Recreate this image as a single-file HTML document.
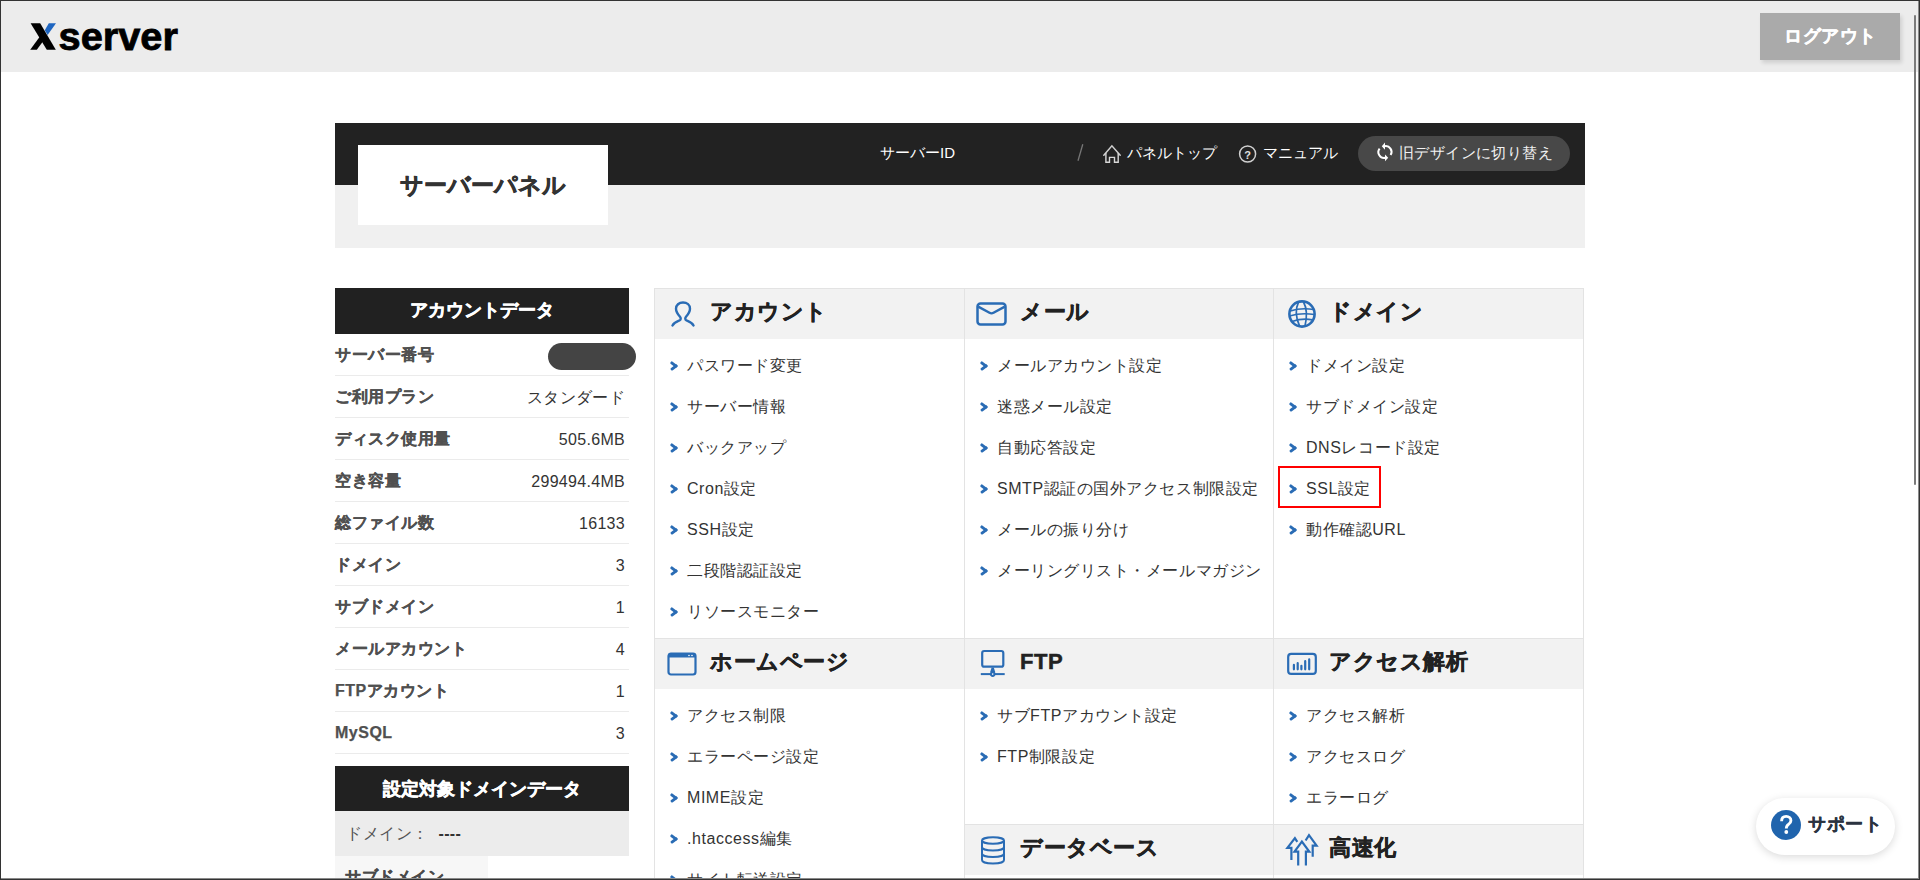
<!DOCTYPE html>
<html><head><meta charset="utf-8">
<style>
*{box-sizing:border-box;margin:0;padding:0}
html,body{width:1920px;height:880px;overflow:hidden;background:#fff}
body{font-family:"Liberation Sans",sans-serif;color:#333;position:relative}
.abs{position:absolute}
#frame{position:absolute;left:0;top:0;width:1920px;height:880px;border-top:1px solid #333;border-left:1px solid #333;border-right:1px solid #333;border-bottom:1px solid #333;box-shadow:inset -1px -1px 0 #8a8a8a;z-index:50;pointer-events:none}
#topbar{left:0;top:0;width:1920px;height:72px;background:#ececec}
#logout{left:1760px;top:13px;width:140px;height:47px;background:#aaa;color:#fff;font-weight:bold;font-size:18px;line-height:47px;text-align:center;box-shadow:2px 3px 4px rgba(0,0,0,.12);letter-spacing:0.6px;padding-left:1px;-webkit-text-stroke:0.4px #fff}
#scroll{left:1914px;top:15px;width:2px;height:470px;background:#7a7a7a;border-radius:1px}
#phead{left:335px;top:123px;width:1250px;height:62px;background:#222}
#psub{left:335px;top:185px;width:1250px;height:63px;background:#f0f0f0}
#pbox{left:358px;top:145px;width:250px;height:80px;background:#fff;font-size:23px;font-weight:bold;color:#333;text-align:center;line-height:80px;-webkit-text-stroke:0.6px #333}
.nav{color:#fff;font-size:15px;top:143px;line-height:20px;white-space:nowrap}
#pill{left:1358px;top:136px;width:212px;height:35px;border-radius:18px;background:#484848}
/* sidebar */
.shead{left:335px;width:294px;height:46px;background:#212121;color:#fff;font-weight:bold;font-size:18px;text-align:center;line-height:46px;-webkit-text-stroke:0.5px #fff}
.srow{left:335px;width:294px;height:42px;border-bottom:1px solid #ebebeb;font-size:16px;line-height:41px}
.srow b{font-size:16px;letter-spacing:0.5px;-webkit-text-stroke:0.25px #505050}
.srow b{position:absolute;left:0;top:0;color:#505050}
.srow span{position:absolute;right:4px;top:1px;color:#333;letter-spacing:0.3px}
/* grid */
.box{position:absolute;border:1px solid #e3e3e3;background:#fff}
.hd{position:absolute;height:50px;background:#f2f2f2;font-size:22px;letter-spacing:0.6px;font-weight:bold;color:#222;line-height:46px}
.hd svg{position:absolute}
.hd span{position:absolute;top:0;-webkit-text-stroke:0.5px #222}
.items{position:absolute;list-style:none}
.items li{height:41px;line-height:41px;font-size:16px;letter-spacing:0.55px;color:#333;position:relative;padding-left:32px;white-space:nowrap}
.items li:before,.items li:after{content:"";position:absolute;left:14.6px;top:18.1px;width:8px;height:2.6px;border-radius:1.3px;background:#2a6cb5;transform:rotate(37deg)}
.items li:after{top:21.3px;transform:rotate(-37deg)}
</style></head><body>
<div id="topbar" class="abs">
  <svg class="abs" style="left:28px;top:20px" width="156" height="34" viewBox="0 0 156 34"><polygon points="2.6,3.2 12.2,3.2 27.8,29.8 18.8,29.8" fill="#000"/><polygon points="2.2,29.8 8.8,29.8 16,20 13,15" fill="#000"/><polygon points="20.8,3.2 28,3.2 19.6,15 16.8,10.2" fill="#1f66c1"/><text x="30.5" y="30" font-family="Liberation Sans" font-weight="bold" font-size="39" fill="#000" stroke="#000" stroke-width="0.8" textLength="119.5" lengthAdjust="spacingAndGlyphs">server</text></svg>
</div>
<div id="logout" class="abs">ログアウト</div>
<div id="scroll" class="abs"></div>

<div id="phead" class="abs"></div>
<div id="psub" class="abs"></div>
<div id="pbox" class="abs">サーバーパネル</div>
<div class="abs nav" style="left:880px">サーバーID</div>
<svg class="abs" style="left:1076px;top:143px" width="8" height="19" viewBox="0 0 8 19"><line x1="6.8" y1="1.2" x2="2" y2="17.8" stroke="#777" stroke-width="1.3"/></svg>
<svg class="abs" style="left:1100px;top:142px" width="24" height="24" viewBox="0 0 24 24"><path d="M3.8 13.2 L11.9 3.8 L20.2 13.2" fill="none" stroke="#d0d0d0" stroke-width="1.5" stroke-linecap="round"/><path d="M5.9 11 V20.2 H9.5 V15.4 H14.5 V20.2 H18.2 V11" fill="none" stroke="#d8d8d8" stroke-width="1.4"/></svg>
<div class="abs nav" style="left:1127px">パネルトップ</div>
<svg class="abs" style="left:1236px;top:142px" width="24" height="24" viewBox="0 0 24 24"><circle cx="11.6" cy="12" r="8" fill="none" stroke="#d0d0d0" stroke-width="1.5"/><text x="11.6" y="17.2" font-size="11" font-weight="bold" text-anchor="middle" fill="#e0e0e0" font-family="Liberation Sans">?</text></svg>
<div class="abs nav" style="left:1263px">マニュアル</div>
<div id="pill" class="abs"></div>
<svg class="abs" style="left:1374px;top:140px" width="24" height="24" viewBox="0 0 24 24"><path d="M10.5 6.2 A5.8 5.8 0 0 1 16.6 15 M5.6 8.6 A5.8 5.8 0 0 0 11.5 17.8" fill="none" stroke="#fff" stroke-width="2"/><polygon points="7.8,6.2 11,2.6 11,9.8" fill="#fff"/><polygon points="14.2,17.8 11,14.4 11,21.2" fill="#fff"/></svg>
<div class="abs nav" style="left:1399px;letter-spacing:0.4px;color:#f2f2f2">旧デザインに切り替え</div>

<!-- sidebar -->
<div class="abs shead" style="top:288px;line-height:45px">アカウントデータ</div>
<div class="abs srow" style="top:334px"><b>サーバー番号</b></div>
<div class="abs" style="left:548px;top:343px;width:88px;height:27px;border-radius:14px;background:#444"></div>
<div class="abs srow" style="top:376px"><b>ご利用プラン</b><span>スタンダード</span></div>
<div class="abs srow" style="top:418px"><b>ディスク使用量</b><span>505.6MB</span></div>
<div class="abs srow" style="top:460px"><b>空き容量</b><span>299494.4MB</span></div>
<div class="abs srow" style="top:502px"><b>総ファイル数</b><span>16133</span></div>
<div class="abs srow" style="top:544px"><b>ドメイン</b><span>3</span></div>
<div class="abs srow" style="top:586px"><b>サブドメイン</b><span>1</span></div>
<div class="abs srow" style="top:628px"><b>メールアカウント</b><span>4</span></div>
<div class="abs srow" style="top:670px"><b>FTPアカウント</b><span>1</span></div>
<div class="abs srow" style="top:712px"><b>MySQL</b><span>3</span></div>
<div class="abs shead" style="top:766px;height:45px;line-height:47px">設定対象ドメインデータ</div>
<div class="abs" style="left:335px;top:811px;width:294px;height:45px;background:#ececec;font-size:16px;line-height:45px;padding-left:11px;color:#555;letter-spacing:0.5px">ドメイン：<b style="color:#333;margin-left:10px;letter-spacing:0.3px">----</b></div>
<div class="abs" style="left:335px;top:856px;width:153px;height:30px;background:#f7f7f7;font-size:16px;font-weight:bold;padding-left:10px;padding-top:11px;line-height:20px;color:#4a4a4a;letter-spacing:0.5px;-webkit-text-stroke:0.25px #4a4a4a">サブドメイン</div>

<!-- grid -->
<div class="box" style="left:654px;top:288px;width:930px;height:600px"></div>
<div class="abs" style="left:964px;top:289px;width:1px;height:600px;background:#e3e3e3"></div>
<div class="abs" style="left:1273px;top:289px;width:1px;height:600px;background:#e3e3e3"></div>
<div class="abs" style="left:655px;top:638px;width:928px;height:1px;background:#e3e3e3"></div>
<div class="abs" style="left:965px;top:824px;width:618px;height:1px;background:#e3e3e3"></div>

<!-- row1 headers -->
<div class="hd" style="left:655px;top:289px;width:309px">
  <svg style="left:16px;top:12px" width="26" height="27" viewBox="0 0 26 27"><path d="M1.5 24.5 C3 21.5 6 20.5 8.5 19.5 C10 18.8 10 17 9 15.8 C6.5 13 5 10.5 5 7.8 C5 4 8 1.5 12 1.5 C16 1.5 19 4 19 7.8 C19 10.5 17.5 13 15 15.8 C14 17 14 18.8 15.5 19.5 C18 20.5 21 21.5 22.5 24.5" fill="none" stroke="#2a6cb5" stroke-width="2.4" stroke-linecap="round" stroke-linejoin="round"/></svg>
  <span style="left:55px">アカウント</span>
</div>
<div class="hd" style="left:965px;top:289px;width:308px">
  <svg style="left:11px;top:13px" width="31" height="24" viewBox="0 0 31 24"><rect x="1.5" y="1.4" width="28" height="21" rx="3" fill="none" stroke="#2a6cb5" stroke-width="2.5"/><path d="M2.2 4.6 L13.5 10.8 Q15.5 11.9 17.5 10.8 L28.8 4.6" fill="none" stroke="#2a6cb5" stroke-width="2.4"/></svg>
  <span style="left:55px">メール</span>
</div>
<div class="hd" style="left:1274px;top:289px;width:309px">
  <svg style="left:13px;top:10px" width="30" height="30" viewBox="0 0 30 30"><circle cx="15" cy="15" r="12.6" fill="none" stroke="#2a6cb5" stroke-width="2.6"/><g fill="none" stroke="#2a6cb5" stroke-width="1.7"><path d="M11.5 3.2 Q6.5 14 12.5 26.8"/><path d="M16.5 3 Q21.5 12 18 27"/><path d="M3.2 12 Q14 8.5 26.8 10.5"/><path d="M2.6 17 Q14 13.5 27.4 15.5"/><path d="M5 22.5 Q15 19 25.5 20.8"/></g></svg>
  <span style="left:55px">ドメイン</span>
</div>

<ul class="items abs" style="left:655px;top:345px;width:309px">
<li>パスワード変更</li><li>サーバー情報</li><li>バックアップ</li><li>Cron設定</li><li>SSH設定</li><li>二段階認証設定</li><li>リソースモニター</li>
</ul>
<ul class="items abs" style="left:965px;top:345px;width:308px">
<li>メールアカウント設定</li><li>迷惑メール設定</li><li>自動応答設定</li><li>SMTP認証の国外アクセス制限設定</li><li>メールの振り分け</li><li>メーリングリスト・メールマガジン</li>
</ul>
<ul class="items abs" style="left:1274px;top:345px;width:309px">
<li>ドメイン設定</li><li>サブドメイン設定</li><li>DNSレコード設定</li><li>SSL設定</li><li>動作確認URL</li>
</ul>
<div class="abs" style="left:1278px;top:466px;width:103px;height:42px;border:2px solid #f00"></div>

<!-- row2 headers -->
<div class="hd" style="left:655px;top:639px;width:309px">
  <svg style="left:12px;top:13px" width="31" height="24" viewBox="0 0 31 24"><rect x="1.5" y="1.5" width="27" height="21" rx="2.5" fill="none" stroke="#2a6cb5" stroke-width="2.2"/><rect x="1.5" y="1.5" width="27" height="4" fill="#2a6cb5"/><circle cx="22" cy="3.5" r="0.8" fill="#fff"/><circle cx="25" cy="3.5" r="0.8" fill="#fff"/></svg>
  <span style="left:55px">ホームページ</span>
</div>
<div class="hd" style="left:965px;top:639px;width:308px">
  <svg style="left:13px;top:8px" width="30" height="32" viewBox="0 0 30 32"><rect x="4.2" y="4" width="21.1" height="15.7" rx="2" fill="none" stroke="#2a6cb5" stroke-width="2.2"/><polygon points="13.6,20.5 15.8,20.5 17.2,25 12.2,25" fill="#2a6cb5"/><path d="M2.8 27.1 H26.7" stroke="#2a6cb5" stroke-width="2"/><circle cx="14.7" cy="27.1" r="2.8" fill="#2a6cb5"/><circle cx="14.7" cy="27.1" r="0.8" fill="#fff"/></svg>
  <span style="left:55px">FTP</span>
</div>
<div class="hd" style="left:1274px;top:639px;width:309px">
  <svg style="left:12px;top:13px" width="32" height="24" viewBox="0 0 32 24"><rect x="2.2" y="1.9" width="27.6" height="20" rx="3" fill="none" stroke="#2a6cb5" stroke-width="2.2"/><path d="M7.9 17.3 V12.9 M11.7 17.3 V11.2 M15.4 17.3 V13.8 M19.2 17.3 V9.2 M23.2 17.3 V7.4" stroke="#2a6cb5" stroke-width="2.2" stroke-linecap="round"/></svg>
  <span style="left:55px">アクセス解析</span>
</div>

<ul class="items abs" style="left:655px;top:695px;width:309px">
<li>アクセス制限</li><li>エラーページ設定</li><li>MIME設定</li><li>.htaccess編集</li><li>サイト転送設定</li>
</ul>
<ul class="items abs" style="left:965px;top:695px;width:308px">
<li>サブFTPアカウント設定</li><li>FTP制限設定</li>
</ul>
<ul class="items abs" style="left:1274px;top:695px;width:309px">
<li>アクセス解析</li><li>アクセスログ</li><li>エラーログ</li>
</ul>

<!-- row3 headers -->
<div class="hd" style="left:965px;top:825px;width:308px">
  <svg style="left:15px;top:11px" width="26" height="29" viewBox="0 0 26 29"><ellipse cx="13" cy="4.5" rx="11" ry="3.2" fill="none" stroke="#2a6cb5" stroke-width="2"/><path d="M2 4.5 V24 C2 26 6 27.5 13 27.5 C20 27.5 24 26 24 24 V4.5 M2 11 C2 13 6 14.5 13 14.5 C20 14.5 24 13 24 11 M2 17.5 C2 19.5 6 21 13 21 C20 21 24 19.5 24 17.5" fill="none" stroke="#2a6cb5" stroke-width="2"/></svg>
  <span style="left:55px">データベース</span>
</div>
<div class="hd" style="left:1274px;top:825px;width:309px">
  <svg style="left:10px;top:6px" width="36" height="40" viewBox="0 0 36 40"><g fill="none" stroke="#2a6cb5" stroke-width="2.2"><path d="M13.3 10.9 L10.9 7.2 L3.4 16.9 H7.4 V29.1"/><path d="M14.2 34.5 V20.6 H10.5 L17.9 10.6 L25.3 20.6 H21.9 V34.5"/><path d="M21.6 9.5 L25 4.1 L32.6 14.6 H28.7 V25.7"/></g></svg>
  <span style="left:55px">高速化</span>
</div>

<!-- support -->
<div class="abs" style="left:1756px;top:798px;width:139px;height:57px;border-radius:29px;background:#fff;box-shadow:0 2px 8px rgba(0,0,0,.15)">
  <svg class="abs" style="left:15px;top:12px" width="30" height="30" viewBox="0 0 30 30"><circle cx="15" cy="15" r="15" fill="#2064ad"/><path d="M10.6 11.2 C10.6 8 12.7 6.4 15.2 6.4 C17.9 6.4 19.9 8.2 19.9 10.7 C19.9 13.1 17.8 14 16.6 15.1 C15.7 15.9 15.3 16.7 15.3 18.4" fill="none" stroke="#fff" stroke-width="2.9"/><circle cx="15.3" cy="22" r="1.9" fill="#fff"/></svg>
  <div class="abs" style="left:52px;top:15px;font-size:18px;font-weight:bold;color:#2b3340;line-height:22px;letter-spacing:0.6px;-webkit-text-stroke:0.3px #2b3340">サポート</div>
</div>

<div id="frame"></div>
</body></html>
